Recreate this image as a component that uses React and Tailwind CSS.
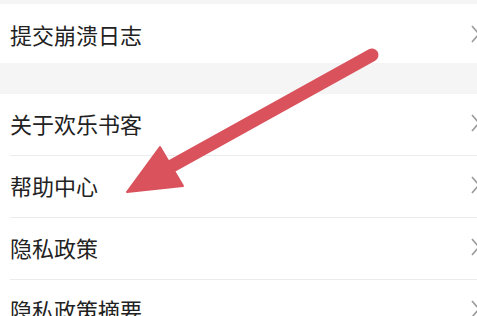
import React from 'react';

const rows = ['关于欢乐书客', '帮助中心', '隐私政策', '隐私政策摘要'];

function Chevron() {
  return (
    <svg width="10" height="18" viewBox="0 0 10 18" className="-mr-[4px] shrink-0 text-[#9a9a9a]">
      <path d="M1 1 L8 9 L1 17" fill="none" stroke="currentColor" strokeWidth="1.6" />
    </svg>
  );
}

function Row({ label }) {
  return (
    <div className="bg-white pl-[10px]">
      <div className="flex h-[62px] items-center justify-between border-b border-[#ececec] pb-[4px]">
        <span className="text-[22px] leading-none text-[#222]">{label}</span>
        <Chevron />
      </div>
    </div>
  );
}

export default function App() {
  return (
    <div
      className="relative flex h-[316px] w-[477px] flex-col gap-[31px] overflow-hidden bg-[#f5f5f5] pt-[4px]"
      style={{ fontFamily: '"Noto Sans CJK SC", "Noto Sans", sans-serif' }}
    >
      <div className="flex h-[59px] shrink-0 items-center justify-between bg-white pl-[10px]">
        <span className="text-[22px] leading-none text-[#222]">提交崩溃日志</span>
        <Chevron />
      </div>
      <div className="flex flex-col">
        {rows.map((r) => (
          <Row key={r} label={r} />
        ))}
      </div>

      {/* red annotation arrow */}
      <svg className="pointer-events-none absolute inset-0" width="477" height="316" viewBox="0 0 477 316">
        <line x1="372" y1="55" x2="170" y2="167" stroke="#d9525c" strokeWidth="13" strokeLinecap="round" />
        <polygon points="127,192 160,147 183,186" fill="#d9525c" stroke="#d9525c" strokeWidth="2" strokeLinejoin="round" />
      </svg>
    </div>
  );
}
